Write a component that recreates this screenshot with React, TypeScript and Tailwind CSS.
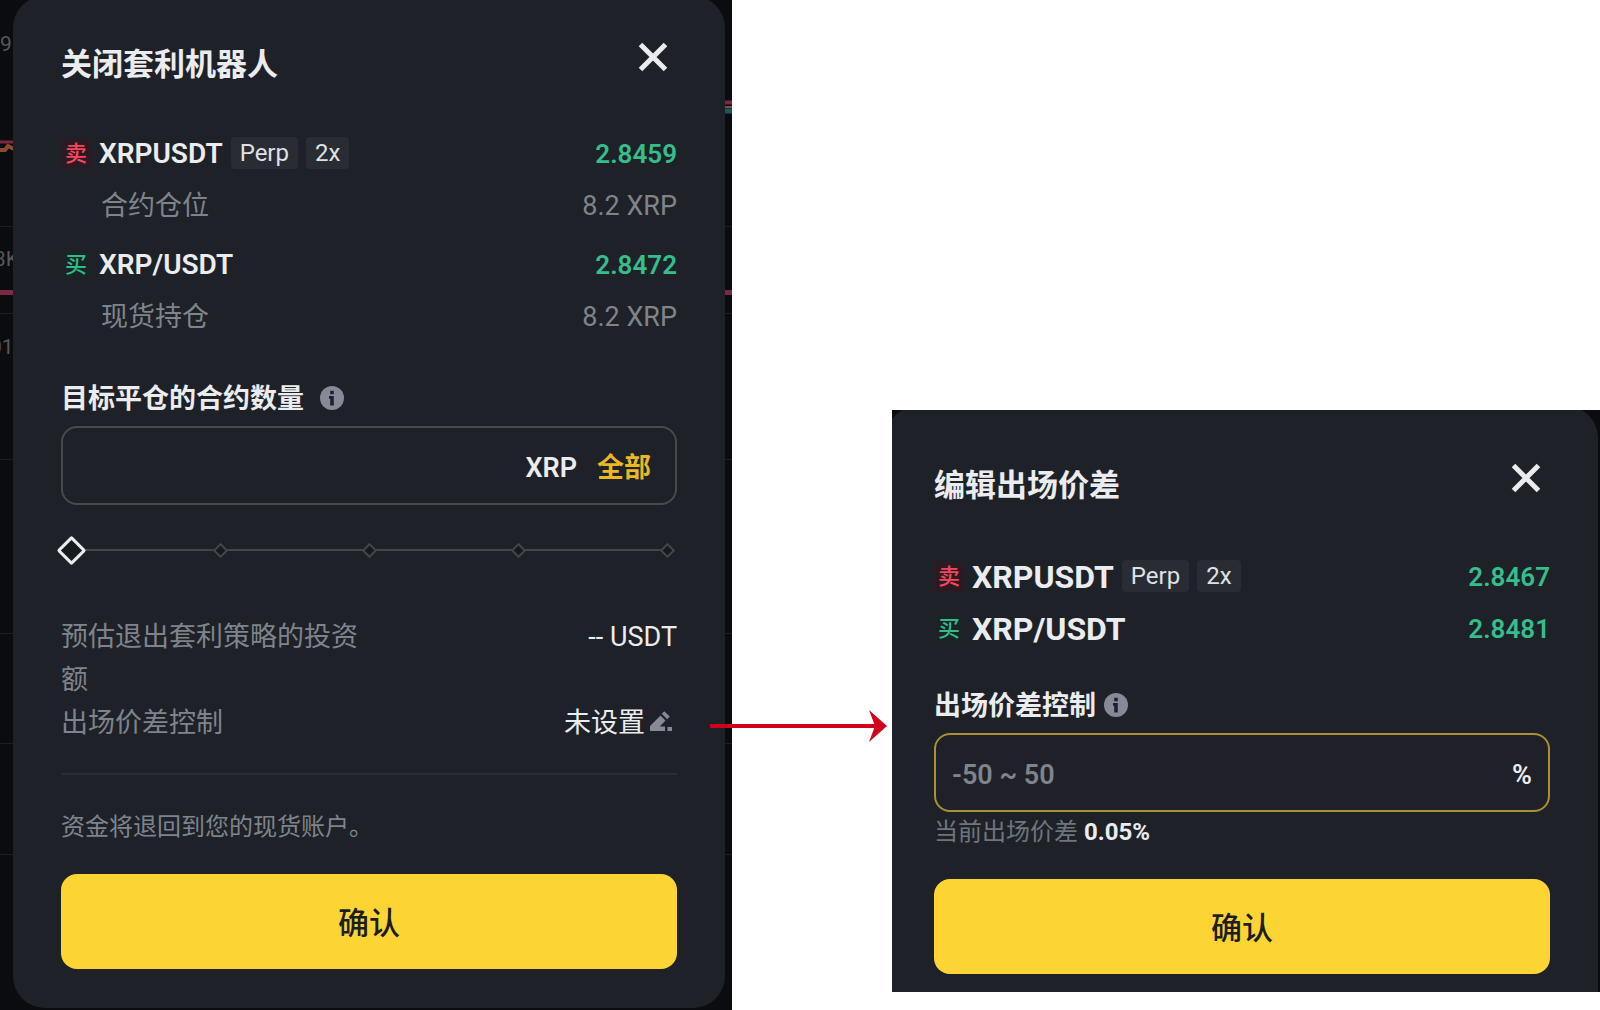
import { useState } from "react"
import clsx from "clsx"

const GRID_LINES = [226, 313, 459, 633, 743, 854]

const STOPS = [0, 25, 50, 75, 100]

function CloseIcon() {
  return (
    <svg viewBox="0 0 34 34" className="w-[34px] h-[34px]" fill="none" stroke="currentColor" strokeWidth="5">
      <path d="M4.5 4.5l25 25M29.5 4.5l-25 25" />
    </svg>
  )
}

function InfoIcon() {
  return (
    <svg viewBox="0 0 24 24" className="w-6 h-6 mb-0.5">
      <circle cx="12" cy="12" r="12" fill="#868a98" />
      <path d="M10.2 4.8h3.6v3.4h-3.6zM9 10h4.8v9.4h-3.6v-6.6H9z" fill="#1e2228" />
    </svg>
  )
}

function EditIcon() {
  return (
    <svg viewBox="1 3 28 28" className="w-7 h-7" fill="#868a98">
      <path d="M2 24v-5L12.5 8.6l5 5L11.8 19.6H17V24z" />
      <path d="M16.2 4.2l5.6 5.2-2.6 2.8-5.4-5.4z" />
      <path d="M19.5 20h4.5v4h-4.5z" />
    </svg>
  )
}

function SideTag({ side }: { side: "sell" | "buy" }) {
  return (
    <span
      className={clsx(
        "w-[30px] h-[30px] flex items-center justify-center rounded text-[22px] leading-[30px] font-medium",
        side === "sell" ? "bg-[#2b1a22] text-[#f6465d]" : "bg-[#1b2326] text-[#2ebd85]"
      )}
    >
      {side === "sell" ? "卖" : "买"}
    </span>
  )
}

function Badge({ children }: { children: React.ReactNode }) {
  return (
    <span className="h-8 px-[9px] rounded bg-[#292c32] text-[24px] leading-8 font-normal text-[#dfe1e5]">
      {children}
    </span>
  )
}

type PairRowProps = {
  side: "sell" | "buy"
  symbol: string
  price: string
  badges?: string[]
  large?: boolean
}

function PairRow({ side, symbol, price, badges = [], large }: PairRowProps) {
  return (
    <div className="h-[52px] flex items-center justify-between">
      <div className="flex items-center gap-2">
        <SideTag side={side} />
        <span className={large ? "text-[32px] font-bold" : "text-[28px] font-semibold"}>{symbol}</span>
        <div className="mb-0.5 flex gap-2">
          {badges.map((b) => (
            <Badge key={b}>{b}</Badge>
          ))}
        </div>
      </div>
      <span className="text-[26px] font-semibold text-[#35bd8b]">{price}</span>
    </div>
  )
}

function PositionRow({ label, value }: { label: string; value: string }) {
  return (
    <div className="h-[52px] pl-10 flex items-center justify-between text-[27px] text-[#7f848c]">
      <span>{label}</span>
      <span>{value}</span>
    </div>
  )
}

function DialogHeader({ title }: { title: string }) {
  return (
    <header className="h-12 flex items-start justify-between">
      <h2 className="text-[31px] leading-[50px] font-bold">{title}</h2>
      <button type="button" aria-label="关闭" className="mr-[7px]">
        <CloseIcon />
      </button>
    </header>
  )
}

function ConfirmButton() {
  return (
    <button
      type="button"
      className="w-full h-[95px] pt-[6px] rounded-2xl bg-[#fcd535] text-[31px] font-medium text-[#1c1e22]"
    >
      确认
    </button>
  )
}

// stepped slider: diamonds are drawn, the native range sits on top
function AmountSlider({ value, onChange }: { value: number; onChange: (v: number) => void }) {
  return (
    <div className="relative h-7 mx-[10px] flex items-center">
      <div className="absolute inset-x-0 h-[2px] bg-[#43484c]" />
      {STOPS.map((stop) => (
        <div key={stop} className="absolute w-0 flex justify-center" style={{ left: `${stop}%` }}>
          {stop === value ? (
            <span className="w-[21px] h-[21px] shrink-0 rotate-45 rounded-xs border-3 border-[#eaecef] bg-[#171a1f]" />
          ) : (
            <span className="w-[11px] h-[11px] shrink-0 rotate-45 border-2 border-[#43484c] bg-[#171a1f]" />
          )}
        </div>
      ))}
      <input
        type="range"
        aria-label="平仓比例"
        min={0}
        max={100}
        step={25}
        value={value}
        onChange={(e) => onChange(Number(e.target.value))}
        className="relative w-full h-7 opacity-0 cursor-pointer"
      />
    </div>
  )
}

function ChartBackdrop() {
  return (
    <div aria-hidden="true" className="absolute inset-0 text-[21px] leading-7 text-[#55585d]">
      <svg className="absolute inset-0 w-full h-full">
        {GRID_LINES.map((y) => (
          <path key={y} d={`M0 ${y}.5h2000`} stroke="#1c1e21" />
        ))}
        <path d="M0 292.5h2000" stroke="#7d2745" strokeWidth="5" />
        <path d="M0 142h14" stroke="#7d2745" strokeWidth="3" />
        <path d="M0 150h5l3-4 6 3" stroke="#8a4a2c" strokeWidth="4" fill="none" />
      </svg>
      <svg className="absolute right-0 top-0 w-2 h-[120px]">
        <path d="M0 102.5h8" stroke="#7d2745" strokeWidth="4" />
        <path d="M0 107h8" stroke="#6b5a4a" strokeWidth="2" />
        <path d="M0 111h8" stroke="#23545c" strokeWidth="5" />
      </svg>
      <span className="absolute left-0 top-[30px]">9</span>
      <span className="absolute -left-[6px] top-[245px]">3K</span>
      <span className="absolute -left-[10px] top-[333px]">01</span>
    </div>
  )
}

function CloseBotDialog() {
  const [amount, setAmount] = useState("")
  const [percent, setPercent] = useState(0)

  return (
    <section className="relative overflow-hidden bg-[#0b0c0f] pl-[13px] pr-[7px] pb-[2px]">
      <ChartBackdrop />
      <div className="relative -mt-1 rounded-[32px] bg-[#1e2228] px-12 pt-11 pb-[39px]">
        <DialogHeader title="关闭套利机器人" />

        <div className="mt-10 flex flex-col gap-[7px]">
          <div>
            <PairRow side="sell" symbol="XRPUSDT" price="2.8459" badges={["Perp", "2x"]} />
            <PositionRow label="合约仓位" value="8.2 XRP" />
          </div>
          <div>
            <PairRow side="buy" symbol="XRP/USDT" price="2.8472" />
            <PositionRow label="现货持仓" value="8.2 XRP" />
          </div>
        </div>

        <div className="mt-9 h-10 flex items-center gap-4">
          <label htmlFor="amount" className="text-[27px] font-bold">
            目标平仓的合约数量
          </label>
          <InfoIcon />
        </div>
        <div className="mt-[7px] h-[79px] flex items-center rounded-2xl border-2 border-[#474b50] pl-4 pr-6 pt-[6px] text-[27px] font-semibold">
          <input
            id="amount"
            type="text"
            value={amount}
            onChange={(e) => setAmount(e.target.value)}
            className="min-w-0 flex-1 bg-transparent outline-none"
          />
          <span>XRP</span>
          <button type="button" onClick={() => setPercent(100)} className="ml-5 font-bold text-[#e9b824]">
            全部
          </button>
        </div>

        <div className="mt-[31px]">
          <AmountSlider value={percent} onChange={setPercent} />
        </div>

        <dl className="mt-[52px] text-[27px] leading-[43px]">
          <div className="flex justify-between">
            <dt className="w-1/2 text-[#7f848c]">预估退出套利策略的投资额</dt>
            <dd>-- USDT</dd>
          </div>
          <div className="flex justify-between">
            <dt className="text-[#7f848c]">出场价差控制</dt>
            <dd className="flex items-center gap-1">
              未设置
              <button type="button" aria-label="编辑">
                <EditIcon />
              </button>
            </dd>
          </div>
        </dl>

        <hr className="mt-7 border-t-2 border-[#292c32]" />
        <p className="mt-8 mb-[27px] text-[24px] leading-10 text-[#7f848c]">资金将退回到您的现货账户。</p>
        <ConfirmButton />
      </div>
    </section>
  )
}

function EditSpreadDialog() {
  const [spread, setSpread] = useState("")

  return (
    <section className="mt-[410px] mb-[18px] self-start overflow-hidden bg-[#0b0c0f] pr-[2px]">
      <div className="-mt-1 -ml-[6px] rounded-t-[32px] bg-[#1e2228] px-12 pt-[55px] pb-[18px]">
        <DialogHeader title="编辑出场价差" />

        <div className="mt-[42px]">
          <PairRow side="sell" symbol="XRPUSDT" price="2.8467" badges={["Perp", "2x"]} large />
          <PairRow side="buy" symbol="XRP/USDT" price="2.8481" large />
        </div>

        <div className="mt-[31px] h-10 flex items-center gap-2">
          <label htmlFor="spread" className="text-[27px] font-bold">
            出场价差控制
          </label>
          <InfoIcon />
        </div>
        <div className="mt-[7px] h-[79px] flex items-center rounded-2xl border-2 border-[#a98f35] bg-[#202128] px-4 pt-[6px] text-[27px] font-semibold">
          <input
            id="spread"
            type="text"
            value={spread}
            onChange={(e) => setSpread(e.target.value)}
            placeholder="-50 ~ 50"
            className="min-w-0 flex-1 bg-transparent outline-none placeholder:text-[#7f848c]"
          />
          <span>%</span>
        </div>
        <p className="mb-[27px] text-[24px] leading-10 text-[#6f757c]">
          当前出场价差 <span className="font-bold text-[#eaecef]">0.05%</span>
        </p>
        <ConfirmButton />
      </div>
    </section>
  )
}

function FlowArrow() {
  return (
    <div className="relative z-10 mt-[710px] -ml-[22px] mr-[5px] h-8 flex items-center">
      <div className="h-1 flex-1 bg-[#d0021b]" />
      <svg viewBox="0 0 18 32" className="-ml-2 w-[18px] h-8">
        <path d="M0 0l18 16L0 32l6-16z" fill="#d0021b" />
      </svg>
    </div>
  )
}

export default function App() {
  return (
    <main className="min-h-screen bg-white grid grid-cols-[732fr_160fr_708fr] font-['Roboto','Noto_Sans_CJK_SC',sans-serif] text-[#eaecef]">
      <CloseBotDialog />
      <FlowArrow />
      <EditSpreadDialog />
    </main>
  )
}
